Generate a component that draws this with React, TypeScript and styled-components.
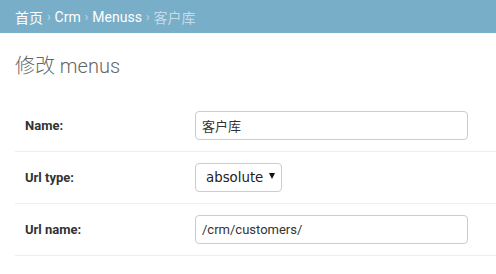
import * as React from "react"
import styled, { createGlobalStyle } from "styled-components"

const GlobalStyle = createGlobalStyle`
    body {
        margin: 0;
        background: #fff;
        font-family: Roboto, "Noto Sans CJK SC", "Liberation Sans", sans-serif;
        color: #333;
    }
`

const Breadcrumbs = styled.div`
    height: 33px;
    background: #79aec8;
    display: flex;
    align-items: center;
    padding: 0 15px;
    font-size: 14px;
    color: #c4dce8;
    white-space: nowrap;

    a {
        color: #fff;
        text-decoration: none;
    }

    .sep {
        margin: 0 4px;
        font-size: 12px;
    }
`

const Content = styled.div`
    padding: 21px 0 0 15px;
`

const Title = styled.h1`
    margin: 0 0 22px;
    font-size: 20px;
    line-height: 24px;
    font-weight: 300;
    color: #666;
`

const Fieldset = styled.fieldset`
    margin: 0;
    padding: 0;
    border: none;
`

const FormRow = styled.div`
    display: flex;
    align-items: center;
    height: 51px;
    padding: 0 10px;
    border-bottom: 1px solid #eee;
`

const Label = styled.label`
    width: 170px;
    flex: 0 0 auto;
    font-size: 13px;
    font-weight: 700;
    color: #333;
`

const TextInput = styled.input`
    box-sizing: border-box;
    width: 273px;
    height: 29px;
    padding: 0 6px;
    border: 1px solid #ccc;
    border-radius: 4px;
    font-family: inherit;
    font-size: 13px;
    color: #333;
    outline: none;
`

const SelectBox = styled.div`
    box-sizing: border-box;
    height: 29px;
    width: 87px;
    display: flex;
    align-items: center;
    justify-content: space-between;
    padding: 0 6px 0 10px;
    border: 1px solid #ccc;
    border-radius: 4px;
    font-family: "DejaVu Sans", sans-serif;
    font-size: 13.33px;
    color: #222;
    background: #fff;

    .arrow {
        width: 0;
        height: 0;
        border-left: 3px solid transparent;
        border-right: 3px solid transparent;
        border-top: 6px solid #111;
        margin-top: -4px;
    }
`

const crumbs = ["首页", "Crm", "Menuss"]

export default function App(): JSX.Element {
    return (
        <>
            <GlobalStyle />
            <Breadcrumbs>
                {crumbs.map(c => (
                    <React.Fragment key={c}>
                        <a href="#">{c}</a>
                        <span className="sep">›</span>
                    </React.Fragment>
                ))}
                客户库
            </Breadcrumbs>
            <Content>
                <Title>修改 menus</Title>
                <Fieldset>
                    <FormRow>
                        <Label>Name:</Label>
                        <TextInput defaultValue="客户库" />
                    </FormRow>
                    <FormRow>
                        <Label>Url type:</Label>
                        <SelectBox>
                            absolute
                            <span className="arrow" />
                        </SelectBox>
                    </FormRow>
                    <FormRow>
                        <Label>Url name:</Label>
                        <TextInput defaultValue="/crm/customers/" />
                    </FormRow>
                </Fieldset>
            </Content>
        </>
    )
}
